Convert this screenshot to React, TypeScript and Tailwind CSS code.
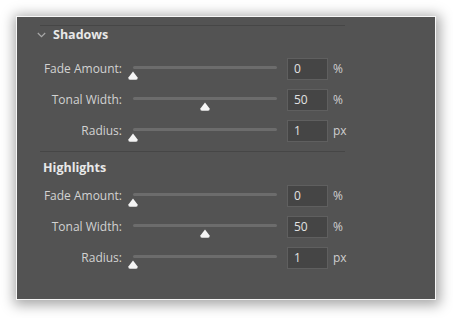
import React from "react";

type Row = { label: string; value: string; unit: string; pct: number };

const shadowRows: Row[] = [
  { label: "Fade Amount:", value: "0", unit: "%", pct: 0 },
  { label: "Tonal Width:", value: "50", unit: "%", pct: 50 },
  { label: "Radius:", value: "1", unit: "px", pct: 0 },
];

const highlightRows: Row[] = [
  { label: "Fade Amount:", value: "0", unit: "%", pct: 0 },
  { label: "Tonal Width:", value: "50", unit: "%", pct: 50 },
  { label: "Radius:", value: "1", unit: "px", pct: 0 },
];

function Thumb({ pct }: { pct: number }) {
  // track starts 5px into the slider box and is 144px wide
  const left = 5 + (pct / 100) * 144 - 5;
  return (
    <svg
      className="absolute top-[13px]"
      style={{ left }}
      width="10"
      height="9"
      viewBox="0 0 10 9"
    >
      <path d="M5 0.5 L9.6 6.6 Q10 8.8 8 8.8 L2 8.8 Q0 8.8 0.4 6.6 Z" fill="#f4f4f4" />
    </svg>
  );
}

function SliderRow({ row }: { row: Row }) {
  return (
    <div className="flex h-[31px] items-center">
      <div className="w-[106px] pr-[1px] text-right text-[12px] text-[#d2d2d2]">{row.label}</div>
      <div className="relative ml-[5px] h-[22px] w-[154px]">
        <div className="absolute left-[5px] top-[8px] h-[3px] w-[144px] rounded-full bg-[#6c6c6c]" />
        <Thumb pct={row.pct} />
      </div>
      <div className="ml-[5px] flex h-[22px] w-[41px] items-center border border-[#5f5f5f] bg-[#454545] pl-[6px] text-[12px] text-[#e2e2e2]">
        {row.value}
      </div>
      <div className="ml-[5px] text-[12px] text-[#cfcfcf]">{row.unit}</div>
    </div>
  );
}

export default function App() {
  return (
    <div
      className="h-[318px] w-[453px] bg-white p-[16px]"
      style={{ fontFamily: '"Open Sans", "DejaVu Sans", sans-serif' }}
    >
      <div className="flex h-[284px] w-[420px] flex-col border border-[#f6f6f6] bg-[#535353] shadow-[1px_2px_12px_3px_rgba(0,0,0,0.35)]">
        <div className="ml-[23px] mt-[8px] h-px w-[305px] bg-[#464646]" />

        <div className="flex h-[18px] items-center">
          <svg className="ml-[20px]" width="9" height="6" viewBox="0 0 9 6">
            <path d="M0.8 1 L4.5 4.6 L8.2 1" fill="none" stroke="#a8a8a8" strokeWidth="1.2" />
          </svg>
          <span className="ml-[7px] text-[12.5px] font-bold text-[#e8e8e8]">Shadows</span>
        </div>

        <div className="mt-[9px] flex flex-col">
          {shadowRows.map((r) => (
            <SliderRow key={r.label} row={r} />
          ))}
        </div>

        <div className="ml-[23px] mt-[5px] h-px w-[305px] bg-[#464646]" />

        <div className="mt-[7px] flex h-[18px] items-center">
          <span className="ml-[26px] text-[12.5px] font-bold text-[#e8e8e8]">Highlights</span>
        </div>

        <div className="mt-[3px] flex flex-col">
          {highlightRows.map((r) => (
            <SliderRow key={r.label} row={r} />
          ))}
        </div>
      </div>
    </div>
  );
}
